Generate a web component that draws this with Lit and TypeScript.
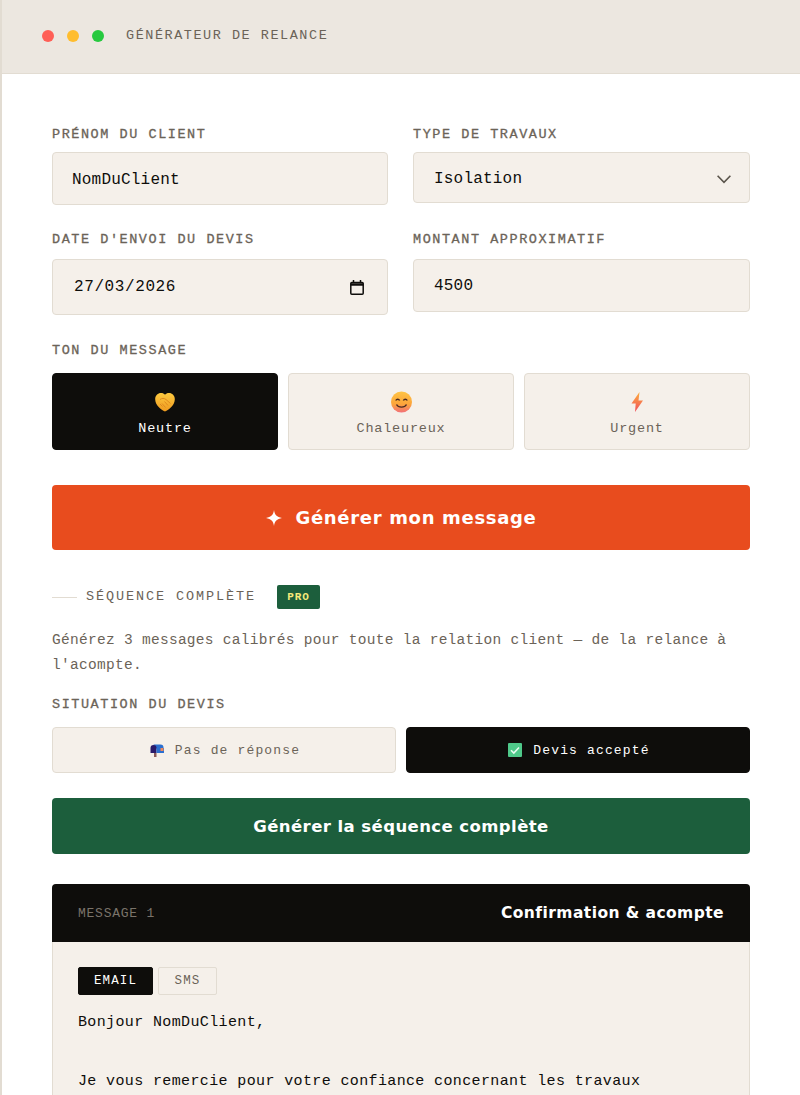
import { LitElement, html, css } from "lit";
import { customElement } from "lit/decorators.js";

@customElement("app-root")
export class AppRoot extends LitElement {
  static styles = css`
    :host { display: block; width: 800px; height: 1095px; overflow: hidden; background: #fff; font-family: "Liberation Mono", monospace; color: #0e0d0b; }
    * { box-sizing: border-box; }
    .shell { border-left: 2px solid #e2dcd2; height: 100%; }
    .bar { height: 74px; margin-left: -2px; background: #ece7e0; border-bottom: 1px solid #e2dcd2; border-left: 2px solid #e2dcd2; display: flex; align-items: center; gap: 13px; padding: 0 0 2px 40px; }
    .dot { width: 12px; height: 12px; border-radius: 50%; }
    .bar span { margin-left: 9px; font-size: 13.5px; letter-spacing: 1.53px; color: #6b6358; }
    .body { padding: 53px 50px 0; display: flex; flex-direction: column; }
    .grid { display: grid; grid-template-columns: 336px 337px; column-gap: 25px; }
    .field { display: flex; flex-direction: column; align-items: stretch; }
    .label { font-size: 13.5px; font-weight: 400; letter-spacing: 1.55px; color: #6b6358; line-height: 16px; -webkit-text-stroke: 0.3px #6b6358; }
    .control { margin-top: 9px; border: 1px solid #e2dcd2; border-radius: 4px; background: #f5f0ea; display: flex; align-items: center; justify-content: space-between; font-size: 16px; letter-spacing: 0.2px; color: #0e0d0b; padding: 1px 18px 0 20px; }
    .first { padding: 3px 18px 0 19px; }
    .tall { height: 53px; }
    .h51 { height: 51px; padding-top: 3px; }
    .h56 { height: 56px; padding: 0 23px 0 21px; letter-spacing: 0.6px; }
    .row2 { margin-top: 27px; }
    .row2 .control { margin-top: 11px; }
    .ton { margin-top: 28px; }
    .tones { display: grid; grid-template-columns: repeat(3, 1fr); gap: 10px; margin-top: 14px; }
    .tone { height: 77px; border: 1px solid #e2dcd2; border-radius: 4px; background: #f5f0ea; color: #6b6358; display: flex; flex-direction: column; align-items: center; justify-content: center; padding-top: 2px; font-size: 13.5px; letter-spacing: 0.8px; }
    .tone.on { background: #0e0d0b; border-color: #0e0d0b; color: #fff; }
    .tone svg { width: 24px; height: 24px; margin-bottom: 7px; display: block; flex: none; }
    .cta { border-radius: 4px; color: #fff; display: flex; align-items: center; justify-content: center; font-family: "DejaVu Sans", sans-serif; font-weight: 700; }
    .gen { margin-top: 35px; height: 65px; background: #e84c1e; font-size: 18px; gap: 14px; letter-spacing: 0.68px; }
    .gen svg { width: 16px; height: 16px; }
    .seq { margin-top: 35px; height: 24px; display: flex; align-items: center; }
    .seq i { width: 25px; height: 1px; background: #e2dcd2; }
    .seq b { font-weight: 400; margin: -2px 0 0 9px; font-size: 13.5px; letter-spacing: 1.9px; color: #6b6358; }
    .pro { margin-left: 21px; width: 43px; height: 24px; background: #1c5e3c; color: #f5e97a; border-radius: 2px; font-size: 11px; font-weight: 700; letter-spacing: 1px; display: flex; align-items: center; justify-content: center; }
    p { margin: 19px 0 0; font-size: 14.5px; letter-spacing: 0.29px; line-height: 25px; color: #6b6358; }
    .sit { margin-top: 19px; }
    .choices { display: grid; grid-template-columns: 1fr 1fr; gap: 10px; margin-top: 14px; }
    .choice { height: 46px; border: 1px solid #e2dcd2; border-radius: 4px; background: #f5f0ea; color: #6b6358; display: flex; align-items: center; justify-content: center; gap: 11px; padding-left: 2px; font-size: 13px; letter-spacing: 1.15px; }
    .choice.on { background: #0e0d0b; border-color: #0e0d0b; color: #fff; }
    .choice svg { width: 14px; height: 14px; flex: none; }
    .go { margin-top: 25px; height: 56px; background: #1c5e3c; font-size: 16.5px; letter-spacing: 0.42px; }
    .msg { margin-top: 30px; border: 1px solid #e2dcd2; border-radius: 4px 4px 0 0; background: #f5f0ea; }
    .head { height: 58px; margin: -1px -1px 0; border-radius: 4px 4px 0 0; background: #0e0d0b; display: flex; align-items: center; justify-content: space-between; padding: 0 26px; color: #fff; }
    .head span { font-size: 13px; letter-spacing: 0.75px; color: #7a736a; }
    .head b { font-family: "DejaVu Sans", sans-serif; font-size: 15.5px; letter-spacing: 0.43px; }
    .inner { padding: 25px 25px 0; }
    .tabs { display: flex; gap: 5px; }
    .tab { height: 28px; border-radius: 2px; display: flex; align-items: center; justify-content: center; font-size: 12.5px; letter-spacing: 1.1px; border: 1px solid #e2dcd2; color: #6b6358; width: 59px; }
    .tab.on { width: 75px; background: #0e0d0b; border-color: #0e0d0b; color: #fff; }
    .txt { margin-top: 13px; font-size: 15px; letter-spacing: 0.37px; line-height: 29.5px; color: #0e0d0b; }
  `;

  render() {
    return html`
      <div class="shell">
        <div class="bar">
          <div class="dot" style="background:#ff5f56"></div>
          <div class="dot" style="background:#ffbd2e"></div>
          <div class="dot" style="background:#27c93f"></div>
          <span>GÉNÉRATEUR DE RELANCE</span>
        </div>
        <div class="body">
          <div class="grid">
            <div class="field">
              <div class="label">PRÉNOM DU CLIENT</div>
              <div class="control tall first">NomDuClient</div>
            </div>
            <div class="field">
              <div class="label">TYPE DE TRAVAUX</div>
              <div class="control h51">Isolation
                <svg width="14" height="9" viewBox="0 0 14 9" fill="none" stroke="#5a544b" stroke-width="1.6"><path d="M.6.8 7 7.400 13.400.8"/></svg>
              </div>
            </div>
          </div>
          <div class="grid row2">
            <div class="field">
              <div class="label">DATE D'ENVOI DU DEVIS</div>
              <div class="control h56">27/03/2026
                <svg width="14" height="15" viewBox="0 0 14 15" fill="none" stroke="#0e0d0b" stroke-width="1.5"><rect x=".8" y="2.500" width="12.400" height="11.700" rx="1"/><path d="M.8 4.500h12.400" stroke-width="2.500"/><path d="M3.500 0v3M10.500 0v3"/></svg>
              </div>
            </div>
            <div class="field">
              <div class="label">MONTANT APPROXIMATIF</div>
              <div class="control tall">4500</div>
            </div>
          </div>
          <div class="label ton">TON DU MESSAGE</div>
          <div class="tones">
            <div class="tone on">
              <svg viewBox="0 0 24 24"><defs><linearGradient id="h" x1="0" y1="0" x2="0" y2="1"><stop offset="0" stop-color="#fdc93f"/><stop offset="1" stop-color="#ee9a1f"/></linearGradient></defs><path d="M12 21.500C8 19.500 2.500 15.500 2.200 9.500 2 5.500 5 3 8 3c1.800 0 3 .6 4 1.800C13 3.600 14.200 3 16 3c3 0 6 2.500 5.800 6.500C21.500 15.500 16 19.500 12 21.500z" fill="url(#h)"/><path d="M7 9.500c2-1.500 4-1.500 6 0l4.500 4M9.500 16.500l-2.500-2.500M12.500 17.500l-3.500-4M15 15.500l-3.500-4" fill="none" stroke="#e08a1e" stroke-width="1"/></svg>
              Neutre
            </div>
            <div class="tone">
              <svg viewBox="0 0 24 24"><defs><linearGradient id="f" x1="0" y1="0" x2="0" y2="1"><stop offset="0" stop-color="#ffc445"/><stop offset=".6" stop-color="#fca53a"/><stop offset="1" stop-color="#f2707a"/></linearGradient></defs><circle cx="12.500" cy="12" r="10.500" fill="url(#f)"/><path d="M6.700 10.500c1-1.700 3-1.700 4 0M14.300 10.500c1-1.700 3-1.700 4 0" fill="none" stroke="#4a2a22" stroke-width="1.400"/><path d="M7.500 14.500c1.800 3.500 8.200 3.500 10 0" fill="none" stroke="#4a2a22" stroke-width="1.400"/></svg>
              Chaleureux
            </div>
            <div class="tone">
              <svg viewBox="0 0 24 24"><defs><linearGradient id="b" x1="0" y1="0" x2="0" y2="1"><stop offset="0" stop-color="#fdae3c"/><stop offset="1" stop-color="#f04e5c"/></linearGradient></defs><path d="M14.500 2 6.500 13.500h4.200L10 22l8-11.500h-4.500z" fill="url(#b)"/></svg>
              Urgent
            </div>
          </div>
          <div class="cta gen">
            <svg viewBox="0 0 16 16"><path d="M8 0c.7 4.800 2.800 7 8 8-5.200 1-7.300 3.200-8 8-.7-4.800-2.800-7-8-8 5.200-1 7.300-3.200 8-8z" fill="#fff"/></svg>
            Générer mon message
          </div>
          <div class="seq"><i></i><b>SÉQUENCE COMPLÈTE</b><div class="pro">PRO</div></div>
          <p>Générez 3 messages calibrés pour toute la relation client — de la relance à l'acompte.</p>
          <div class="label sit">SITUATION DU DEVIS</div>
          <div class="choices">
            <div class="choice">
              <svg viewBox="0 0 14 14"><path d="M3.500 1.500h7a3 3 0 0 1 3 3V9h-5z" fill="#2b6fd0"/><path d="M.5 5a3 3 0 0 1 6 0v5h-6z" fill="#2a1a6a"/><path d="M6.500 5H14v5H6.500z" fill="#2b6fd0"/><rect x="10.500" y="5" width="3" height="3" fill="#f08a5a"/><rect x="4" y="10" width="2.500" height="4" fill="#8a5a5a"/></svg>
              Pas de réponse
            </div>
            <div class="choice on">
              <svg viewBox="0 0 14 14"><rect width="14" height="14" rx="1" fill="#4fc98a"/><path d="M3 7.200 5.800 10 11 4.500" fill="none" stroke="#e9fbf1" stroke-width="1.600"/></svg>
              Devis accepté
            </div>
          </div>
          <div class="cta go">Générer la séquence complète</div>
          <div class="msg">
            <div class="head"><span>MESSAGE 1</span><b>Confirmation &amp; acompte</b></div>
            <div class="inner">
              <div class="tabs"><div class="tab on">EMAIL</div><div class="tab">SMS</div></div>
              <div class="txt">Bonjour NomDuClient,<br /><br />Je vous remercie pour votre confiance concernant les travaux</div>
            </div>
          </div>
        </div>
      </div>
    `;
  }
}
